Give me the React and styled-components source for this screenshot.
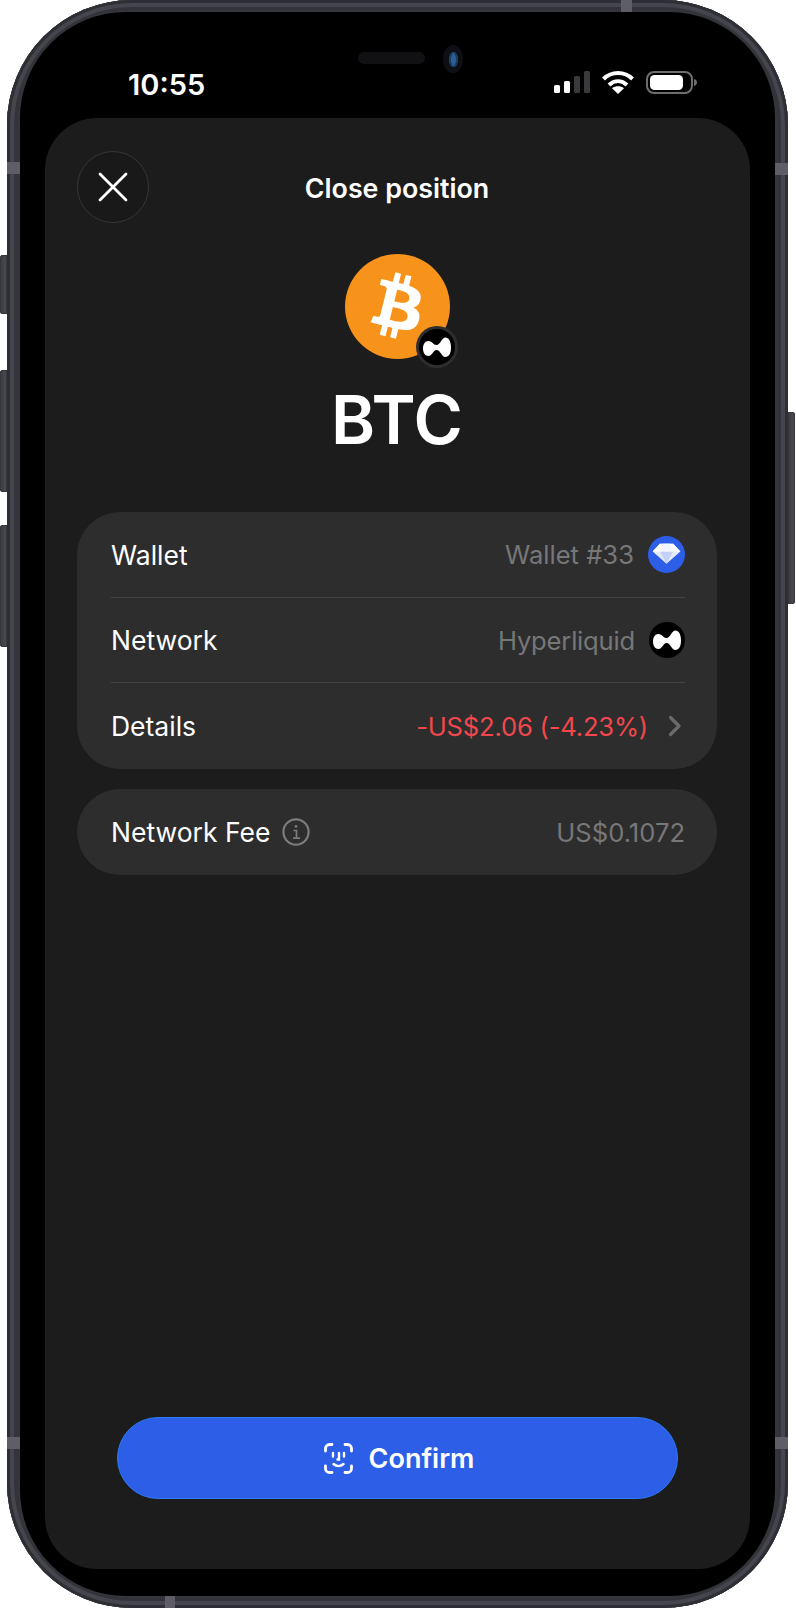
import React from 'react';
import styled, { createGlobalStyle } from 'styled-components';

const GlobalStyle = createGlobalStyle`
    html, body {
        margin: 0;
        padding: 0;
        background: #ffffff;
    }
    body {
        font-family: Inter, "Liberation Sans", sans-serif;
    }
`
const Device = styled.div`
    position: relative;
    box-sizing: border-box;
    width: 781px;
    height: 1608px;
    margin-left: 7px;
    padding: 12px 13px;
    display: flex;
    border-radius: 125px;
    background: #35353d;
    box-shadow: inset 0 0 0 3px #2e2e35, inset 0 0 0 7px #45454d, inset 0 0 0 10px #33333a;
`
const SideButton = styled.div`
    position: absolute;
    top: ${p => p.$top}px;
    height: ${p => p.$height}px;
    width: 7px;
    ${p => p.$right ? 'right: -7px;' : 'left: -7px;'}
    border-radius: ${p => p.$right ? '0 3px 3px 0' : '3px 0 0 3px'};
    background: linear-gradient(90deg, #3a3a40, #4c4c52);
    box-shadow: inset 0 0 0 1px #36363c;
`
const Band = styled.div`
    position: absolute;
    background: #5f5d65;
    ${p => p.$side === 'left' && `left: 0; width: 13px; height: 12px; top: ${p.$at}px;`}
    ${p => p.$side === 'right' && `right: 0; width: 13px; height: 12px; top: ${p.$at}px;`}
    ${p => p.$side === 'top' && `top: 0; width: 11px; height: 12px; left: ${p.$at}px;`}
    ${p => p.$side === 'bottom' && `bottom: 0; width: 10px; height: 12px; left: ${p.$at}px;`}
`
const Screen = styled.div`
    position: relative;
    flex: 1;
    display: flex;
    flex-direction: column;
    box-sizing: border-box;
    padding: 0 25px 27px;
    background: #000000;
    border-radius: 106px;
    overflow: hidden;
`
const Speaker = styled.div`
    position: absolute;
    top: 40px;
    left: 338px;
    width: 67px;
    height: 12px;
    border-radius: 6px;
    background: #111113;
`
const Camera = styled.div`
    position: absolute;
    top: 33px;
    left: 423px;
    width: 20px;
    height: 28px;
    border-radius: 50%;
    background: #0d0f14;
    display: flex;
    align-items: center;
    justify-content: center;
    &::after {
        content: '';
        width: 9px;
        height: 15px;
        border-radius: 50%;
        background: #2f5f92;
        box-shadow: inset 2px 0 0 #1a3c63, inset -2px 0 0 #1a3c63;
    }
`
const StatusBar = styled.div`
    height: 106px;
    flex: none;
    display: flex;
    align-items: flex-start;
    justify-content: space-between;
    padding: 55px 53px 0 83px;
    box-sizing: border-box;
`
const Time = styled.span`
    color: #ffffff;
    font-size: 29px;
    font-weight: 600;
    line-height: 35px;
`
const StatusIcons = styled.div`
    display: flex;
    align-items: center;
    gap: 12px;
    margin-top: 3px;
`
const Sheet = styled.div`
    flex: 1;
    display: flex;
    flex-direction: column;
    box-sizing: border-box;
    padding: 33px 33px 70px 32px;
    background: #1c1c1d;
    border-radius: 52px;
`
const Header = styled.div`
    display: grid;
    grid-template-columns: 72px 1fr 72px;
    align-items: center;
    height: 72px;
`
const CloseButton = styled.button`
    width: 72px;
    height: 72px;
    padding: 0;
    display: flex;
    align-items: center;
    justify-content: center;
    background: #19191a;
    border: 1px solid #363637;
    border-radius: 50%;
`
const Title = styled.h1`
    margin: 0;
    padding-top: 2px;
    text-align: center;
    color: #ffffff;
    font-size: 26.8px;
    font-weight: 600;
`
const Hero = styled.div`
    display: flex;
    flex-direction: column;
    align-items: center;
    margin-top: 31px;
`
const CoinWrap = styled.div`
    position: relative;
    width: 105px;
    height: 105px;
`
const CoinBadge = styled.div`
    position: absolute;
    right: -8px;
    bottom: -9px;
    display: flex;
    padding: 3px;
    border-radius: 50%;
    background: #2e2e2f;
`
const Symbol = styled.div`
    margin-top: 20px;
    color: #ffffff;
    font-size: 67px;
    font-weight: 600;
    line-height: 82px;
`
const Card = styled.div`
    display: flex;
    flex-direction: column;
    margin-top: ${p => p.$top}px;
    padding: 0 32px 0 34px;
    background: #2d2d2e;
    border-radius: 43px;
`
const Row = styled.div`
    display: flex;
    align-items: center;
    justify-content: space-between;
    height: ${p => p.$height}px;
    box-sizing: border-box;
    ${p => p.$divider && 'border-bottom: 1px solid #434344;'}
`
const Label = styled.span`
    display: flex;
    align-items: center;
    gap: 12px;
    color: #ffffff;
    font-size: 26.5px;
    font-weight: 400;
`
const Value = styled.span`
    display: flex;
    align-items: center;
    gap: ${p => p.$red ? 20 : 14}px;
    color: ${p => p.$red ? '#f2474d' : '#777778'};
    font-size: 25.6px;
    font-weight: 400;
    letter-spacing: ${p => p.$tight ? '-0.2px' : '0'};
`
const ChevronSlot = styled.span`
    display: flex;
    margin-right: 3px;
`
const ConfirmButton = styled.button`
    margin: auto 39px 0 40px;
    height: 82px;
    padding: 0 0 0 3px;
    display: flex;
    align-items: center;
    justify-content: center;
    gap: 16px;
    box-sizing: border-box;
    color: #ffffff;
    background: #2c5ee8;
    border: 1px solid #2a7cf0;
    border-radius: 41px;
    font-family: inherit;
    font-size: 27px;
    font-weight: 600;
`

const HyperMark = ({ size }) => (
    <svg width={size} height={size} viewBox="0 0 36 36">
        <circle cx="18" cy="18" r="18" fill="#000" />
        <path fill="#fff" d="M32 18.500C32 24.500 29.800 28 26.500 28 22.500 28 21.500 21 17.500 21 14 21 13.500 27 9.500 27 6 27 4 23.500 4 19.500 4 15.500 6 12 9.500 12 13.500 12 14 16 17.500 16 21.500 16 22.500 8.500 26.500 8.500 29.800 8.500 32 12.500 32 18.500Z" />
    </svg>
)

const WalletMark = () => (
    <svg width="37" height="37" viewBox="0 0 36 36">
        <circle cx="18" cy="18" r="18" fill="#2c5ee8" />
        <path fill="#e4eafc" d="M11.500 7.500h13L31.500 15 18 27 4.500 15z" />
        <path fill="#ffffff" d="M11.500 7.500h13L31.500 15h-27z" />
        <path fill="#c3d1f8" d="M11.500 15h13L18 27z" />
        <path fill="#f3f6fe" d="M14.500 7.500h7L24.500 15h-13z" />
    </svg>
)

const BitcoinMark = () => (
    <svg width="105" height="105" viewBox="0 0 64 64">
        <circle cx="32" cy="32" r="32" fill="#f7931a" />
        <path fill="#fff" d="M46.100 27.441c.64-4.258-2.606-6.547-7.039-8.074l1.438-5.768-3.512-.875-1.400 5.616c-.922-.23-1.870-.447-2.812-.662l1.410-5.653-3.509-.875-1.439 5.766c-.764-.174-1.514-.346-2.242-.527l.004-.018-4.842-1.209-.934 3.750s2.605.597 2.550.634c1.422.355 1.680 1.296 1.636 2.042l-1.638 6.571c.098.025.225.061.365.117l-.37-.092-2.297 9.205c-.174.432-.615 1.080-1.609.834.035.051-2.552-.637-2.552-.637l-1.743 4.020 4.570 1.139c.85.213 1.683.436 2.502.646l-1.453 5.835 3.507.875 1.440-5.772c.957.26 1.887.5 2.797.726L27.504 50.800l3.511.875 1.453-5.823c5.987 1.133 10.490.676 12.383-4.738 1.527-4.360-.075-6.875-3.225-8.516 2.294-.531 4.022-2.040 4.483-5.157zM38.080 38.690c-1.086 4.360-8.426 2.004-10.807 1.412l1.928-7.729c2.380.594 10.011 1.770 8.880 6.317zm1.085-11.312c-.99 3.966-7.100 1.951-9.083 1.457l1.748-7.010c1.983.494 8.367 1.416 7.335 5.553z" />
    </svg>
)

const CloseIcon = () => (
    <svg width="30" height="30" viewBox="0 0 30 30" fill="none" stroke="#fff" strokeWidth="2.800" strokeLinecap="round">
        <path d="M2 2l26 26M28 2L2 28" />
    </svg>
)

const InfoIcon = () => (
    <svg width="28" height="28" viewBox="0 0 28 28" fill="none" stroke="#7b7b7c" strokeWidth="2.200">
        <circle cx="14" cy="14" r="12.600" />
        <path strokeWidth="1.700" d="M11.500 12.500H14.500V20M11 20.200h7" />
        <circle cx="14" cy="8.400" r="1.400" fill="#7b7b7c" stroke="none" />
    </svg>
)

const Chevron = () => (
    <svg width="14" height="22" viewBox="0 0 14 22" fill="none" stroke="#6b6b6c" strokeWidth="3.200" strokeLinecap="round" strokeLinejoin="round">
        <path d="M2.500 2.500L11 11l-8.500 8.500" />
    </svg>
)

const FaceIcon = () => (
    <svg width="29" height="31" viewBox="0 0 29 31" fill="none" stroke="#fff" strokeWidth="2.800" strokeLinecap="round">
        <path d="M1.500 8V5.500a4 4 0 0 1 4-4H8M21 1.500h2.500a4 4 0 0 1 4 4V8M27.500 23v2.500a4 4 0 0 1-4 4H21M8 29.500H5.500a4 4 0 0 1-4-4V23" />
        <path strokeWidth="2.400" d="M9 10v3.500M20 10v3.500M15 10v6.500h-1.500M9.500 21c3 2.600 7 2.600 10 0" />
    </svg>
)

const SignalIcon = () => (
    <svg width="36" height="22" viewBox="0 0 36 22">
        <rect x="0" y="14" width="6" height="8" rx="1.500" fill="#fff" />
        <rect x="10" y="10" width="6" height="12" rx="1.500" fill="#fff" />
        <rect x="20" y="5" width="6" height="17" rx="1.500" fill="#3a3a3c" />
        <rect x="30" y="0" width="6" height="22" rx="1.500" fill="#3a3a3c" />
    </svg>
)

const WifiIcon = () => (
    <svg width="32" height="24" viewBox="0 0 32 24" fill="none" stroke="#fff" strokeWidth="4">
        <path d="M1.500 9C9.500 1 22.500 1 30.500 9M7 15c5.500-5 12.500-5 18 0" />
        <path fill="#fff" stroke="none" d="M16 24l-6-5.800c3.500-2.600 8.500-2.600 12 0z" />
    </svg>
)

const BatteryIcon = () => (
    <svg width="51" height="23" viewBox="0 0 51 23">
        <rect x="1" y="1" width="45" height="21" rx="7" fill="none" stroke="#6e6e71" strokeWidth="2" />
        <rect x="4" y="4" width="33" height="15" rx="4.500" fill="#fff" />
        <path fill="#6e6e71" d="M48 8c1.800.4 3 1.800 3 3.500s-1.200 3.100-3 3.500z" />
    </svg>
)

function App() {
    return (
        <>
            <GlobalStyle />
            <Device>
                <SideButton $top={255} $height={59} />
                <SideButton $top={370} $height={122} />
                <SideButton $top={525} $height={122} />
                <SideButton $right $top={412} $height={192} />
                <Band $side='left' $at={162} />
                <Band $side='right' $at={163} />
                <Band $side='left' $at={1437} />
                <Band $side='right' $at={1437} />
                <Band $side='top' $at={614} />
                <Band $side='bottom' $at={158} />
                <Screen>
                    <Speaker />
                    <Camera />
                    <StatusBar>
                        <Time>10:55</Time>
                        <StatusIcons>
                            <SignalIcon />
                            <WifiIcon />
                            <BatteryIcon />
                        </StatusIcons>
                    </StatusBar>
                    <Sheet>
                        <Header>
                            <CloseButton><CloseIcon /></CloseButton>
                            <Title>Close position</Title>
                        </Header>
                        <Hero>
                            <CoinWrap>
                                <BitcoinMark />
                                <CoinBadge><HyperMark size={36} /></CoinBadge>
                            </CoinWrap>
                            <Symbol>BTC</Symbol>
                        </Hero>
                        <Card $top={51}>
                            <Row $divider $height={86}>
                                <Label>Wallet</Label>
                                <Value>Wallet #33 <WalletMark /></Value>
                            </Row>
                            <Row $divider $height={85}>
                                <Label>Network</Label>
                                <Value $tight>Hyperliquid <HyperMark size={36} /></Value>
                            </Row>
                            <Row $height={86}>
                                <Label>Details</Label>
                                <Value $red $tight>-US$2.06 (-4.23%) <ChevronSlot><Chevron /></ChevronSlot></Value>
                            </Row>
                        </Card>
                        <Card $top={20}>
                            <Row $height={86}>
                                <Label>Network Fee <InfoIcon /></Label>
                                <Value>US$0.1072</Value>
                            </Row>
                        </Card>
                        <ConfirmButton><FaceIcon /> Confirm</ConfirmButton>
                    </Sheet>
                </Screen>
            </Device>
        </>
    )
}

export default App;
